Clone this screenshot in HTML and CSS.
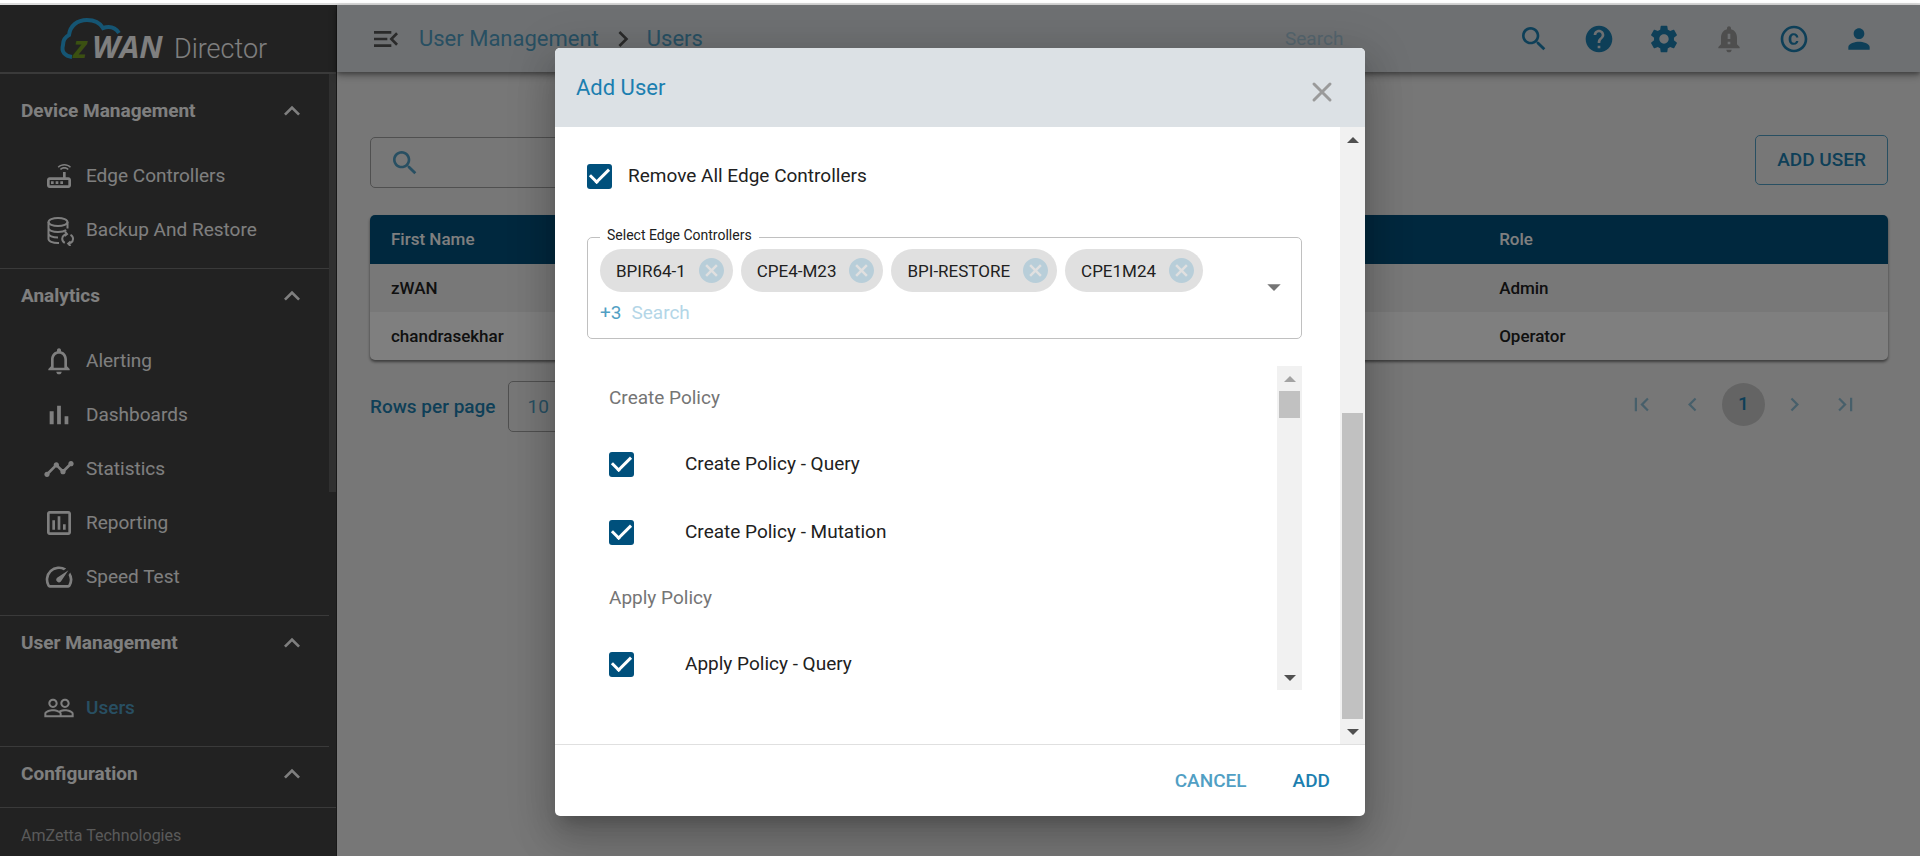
FILE: index.html
```html
<!DOCTYPE html>
<html lang="en">
<head>
<meta charset="utf-8">
<title>zWAN Director - Users</title>
<link rel="stylesheet" href="styles.css">
</head>
<body>
<div class="app">
  <aside class="sidebar">
    <div class="brand">
      <svg class="brand-logo" viewBox="0 0 220 56" role="img" aria-label="zWAN Director">
        <path d="M12 41C5 40 1 36 3 29C3 24 5 21 9 19C10 10 17 4 27 4C34 4 40 7 43 12C49 10 55 11 59 17" fill="none" stroke="#2aaae6" stroke-width="4"/>
        <text class="logo-z" x="13" y="42">z</text>
        <text class="logo-wan" x="32" y="42">WAN</text>
        <text class="logo-director" x="114" y="42">Director</text>
      </svg>
    </div>
    <div class="nav-wrap">
      <nav class="nav">
        <section class="group first">
          <button class="group-title">Device Management<svg class="icon" viewBox="0 0 24 24"><path d="M12 8l-6 6 1.41 1.41L12 10.83l4.59 4.58L18 14z"/></svg></button>
          <a class="nav-item" href="#"><svg class="icon" viewBox="0 0 24 24"><path d="M19 13h-2V9h-2v4H5c-1.1 0-2 .9-2 2v4c0 1.1.9 2 2 2h14c1.1 0 2-.9 2-2v-4c0-1.1-.9-2-2-2zm0 6H5v-4h14v4zM6 16h2v2H6zm3.500 0h2v2h-2zm3.500 0h2v2h-2zM20.200 5.900l.8-.8C19.600 3.700 17.800 3 16 3s-3.600.7-5 2.100l.8.8C13 4.800 14.500 4.200 16 4.200s3 .6 4.200 1.700zm-.9.8c-.9-.9-2.100-1.400-3.300-1.400s-2.400.5-3.300 1.400l.8.8c.7-.7 1.600-1 2.500-1 .9 0 1.800.3 2.500 1l.8-.8z"/></svg>Edge Controllers</a>
          <a class="nav-item" href="#"><svg class="icon line" viewBox="0 0 32 32"><ellipse cx="15" cy="8" rx="9.500" ry="4"/><path d="M5.500 8v17c0 2.200 4 4 9.500 4h1M24.500 8v6.500M5.500 14c0 2.200 4 4 9.500 4 3.500 0 6.500-.7 8.200-1.800M5.500 19.700c0 2 4 3.800 9.500 3.800"/><path d="M21.800 28.800a4.500 4.500 0 0 1-.3-8l2.200-.6M27.500 20.800a4.500 4.500 0 0 1 .2 8l-2.200.6M22 17.600l2 2.500-2.400 2M27.400 32l-2.200-2.500 2.400-2"/></svg>Backup And Restore</a>
        </section>
        <section class="group">
          <button class="group-title">Analytics<svg class="icon" viewBox="0 0 24 24"><path d="M12 8l-6 6 1.41 1.41L12 10.83l4.59 4.58L18 14z"/></svg></button>
          <a class="nav-item" href="#"><svg class="icon" viewBox="0 0 24 24"><path d="M12 22c1.100 0 2-.9 2-2h-4c0 1.100.9 2 2 2zm6-6v-5c0-3.070-1.630-5.640-4.500-6.320V4c0-.83-.67-1.500-1.500-1.500s-1.500.67-1.500 1.500v.68C7.640 5.360 6 7.920 6 11v5l-2 2v1h16v-1l-2-2zm-2 1H8v-6c0-2.480 1.510-4.500 4-4.500s4 2.020 4 4.500v6z"/></svg>Alerting</a>
          <a class="nav-item" href="#"><svg class="icon" viewBox="0 0 24 24"><path d="M5 9.200h3V19H5zM10.600 5h2.800v14h-2.800zm5.600 8H19v6h-2.800z"/></svg>Dashboards</a>
          <a class="nav-item" href="#"><svg class="icon" viewBox="0 0 24 24"><path d="M23 8c0 1.100-.9 2-2 2-.18 0-.35-.02-.51-.07l-3.560 3.550c.05.16.07.34.07.52 0 1.100-.9 2-2 2s-2-.9-2-2c0-.18.02-.36.07-.52l-2.550-2.550c-.16.05-.34.07-.52.07s-.36-.02-.52-.07l-4.550 4.560c.05.16.07.33.07.51 0 1.100-.9 2-2 2s-2-.9-2-2 .9-2 2-2c.18 0 .35.02.51.07l4.560-4.550C8.020 9.360 8 9.180 8 9c0-1.100.9-2 2-2s2 .9 2 2c0 .18-.02.36-.07.52l2.550 2.550c.16-.05.34-.07.52-.07s.36.02.52.07l3.550-3.560C19.020 8.350 19 8.180 19 8c0-1.100.9-2 2-2s2 .9 2 2z"/></svg>Statistics</a>
          <a class="nav-item" href="#"><svg class="icon" viewBox="0 0 24 24"><path d="M19 3H5c-1.100 0-2 .9-2 2v14c0 1.100.9 2 2 2h14c1.100 0 2-.9 2-2V5c0-1.100-.9-2-2-2zm0 16H5V5h14v14zM7 10h2v7H7zm4-3h2v10h-2zm4 6h2v4h-2z"/></svg>Reporting</a>
          <a class="nav-item" href="#"><svg class="icon" viewBox="0 0 24 24"><path d="M20.380 8.570l-1.230 1.850a8 8 0 0 1-.22 7.580H5.070A8 8 0 0 1 15.580 6.850l1.850-1.230A10 10 0 0 0 3.350 19a2 2 0 0 0 1.720 1h13.850a2 2 0 0 0 1.740-1 10 10 0 0 0-.27-10.440zM10.590 15.410a2 2 0 0 0 2.830 0l5.660-8.490-8.490 5.660a2 2 0 0 0 0 2.830z"/></svg>Speed Test</a>
        </section>
        <section class="group">
          <button class="group-title">User Management<svg class="icon" viewBox="0 0 24 24"><path d="M12 8l-6 6 1.41 1.41L12 10.83l4.59 4.58L18 14z"/></svg></button>
          <a class="nav-item active" href="#"><svg class="icon" viewBox="0 0 24 24"><path d="M16.500 13c-1.200 0-3.070.34-4.500 1-1.430-.67-3.300-1-4.500-1C5.330 13 1 14.080 1 16.250V19h22v-2.750c0-2.170-4.330-3.250-6.500-3.250zm-4 4.500h-10v-1.250c0-.54 2.560-1.750 5-1.750s5 1.210 5 1.750v1.250zm9 0H14v-1.250c0-.46-.2-.86-.52-1.220.88-.3 1.960-.53 3.020-.53 2.440 0 5 1.210 5 1.750v1.250zM7.500 12c1.930 0 3.500-1.570 3.500-3.500S9.430 5 7.500 5 4 6.570 4 8.500 5.570 12 7.500 12zm0-5.500c1.100 0 2 .9 2 2s-.9 2-2 2-2-.9-2-2 .9-2 2-2zm9 5.500c1.930 0 3.500-1.570 3.500-3.500S18.430 5 16.500 5 13 6.570 13 8.500s1.570 3.500 3.500 3.500zm0-5.500c1.100 0 2 .9 2 2s-.9 2-2 2-2-.9-2-2 .9-2 2-2z"/></svg>Users</a>
        </section>
        <section class="group">
          <button class="group-title">Configuration<svg class="icon" viewBox="0 0 24 24"><path d="M12 8l-6 6 1.41 1.41L12 10.83l4.59 4.58L18 14z"/></svg></button>
        </section>
      </nav>
      <div class="nav-scroll" aria-hidden="true"><div class="nav-thumb"></div></div>
    </div>
    <footer class="sidebar-footer">AmZetta Technologies</footer>
  </aside>

  <div class="page">
    <header class="topbar">
      <button class="icon-btn menu" aria-label="Collapse menu"><svg class="icon" viewBox="0 0 24 24"><path d="M3 18h13v-2H3v2zM3 13h10v-2H3v2zm0-7v2h13V6H3zm18 9.590L17.420 12 21 8.410 19.590 7l-5 5 5 5L21 15.590z"/></svg></button>
      <nav class="crumbs" aria-label="Breadcrumb">
        <a href="#">User Management</a>
        <svg class="icon" viewBox="0 0 24 24"><path d="M10 6L8.590 7.410 13.170 12l-4.580 4.590L10 18l6-6z"/></svg>
        <a href="#">Users</a>
      </nav>
      <input class="top-search" type="text" placeholder="Search" aria-label="Search">
      <div class="actions">
        <button class="icon-btn" aria-label="Search"><svg class="icon" viewBox="0 0 24 24"><path d="M15.500 14h-.79l-.28-.27C15.410 12.590 16 11.110 16 9.500 16 5.910 13.090 3 9.500 3S3 5.910 3 9.500 5.910 16 9.500 16c1.610 0 3.090-.59 4.230-1.570l.27.28v.79l5 4.990L20.490 19l-4.990-5zm-6 0C7.010 14 5 11.990 5 9.500S7.010 5 9.500 5 14 7.010 14 9.500 11.990 14 9.500 14z"/></svg></button>
        <button class="icon-btn" aria-label="Help"><svg class="icon" viewBox="0 0 24 24"><path d="M12 2C6.480 2 2 6.480 2 12s4.480 10 10 10 10-4.480 10-10S17.520 2 12 2zm1 17h-2v-2h2v2zm2.070-7.750l-.9.92C13.450 12.900 13 13.500 13 15h-2v-.5c0-1.100.45-2.100 1.170-2.830l1.240-1.260c.37-.36.59-.86.59-1.410 0-1.100-.9-2-2-2s-2 .9-2 2H8c0-2.210 1.790-4 4-4s4 1.790 4 4c0 .88-.36 1.680-.93 2.250z"/></svg></button>
        <button class="icon-btn" aria-label="Settings"><svg class="icon" viewBox="0 0 24 24"><path d="M19.430 12.980c.04-.32.07-.64.07-.98s-.03-.66-.07-.98l2.110-1.650c.19-.15.24-.42.12-.64l-2-3.460c-.12-.22-.39-.3-.61-.22l-2.490 1c-.52-.4-1.080-.73-1.690-.98l-.38-2.650C14.460 2.180 14.250 2 14 2h-4c-.25 0-.46.18-.49.42l-.38 2.650c-.61.25-1.170.59-1.690.98l-2.490-1c-.23-.09-.49 0-.61.22l-2 3.460c-.13.22-.07.49.12.64l2.110 1.650c-.04.32-.07.65-.07.98s.03.66.07.98l-2.110 1.650c-.19.15-.24.42-.12.64l2 3.460c.12.22.39.3.61.22l2.490-1c.52.4 1.080.73 1.690.98l.38 2.650c.03.24.24.42.49.42h4c.25 0 .46-.18.49-.42l.38-2.650c.61-.25 1.170-.59 1.690-.98l2.490 1c.23.09.49 0 .61-.22l2-3.460c.12-.22.07-.49-.12-.64l-2.110-1.650zM12 15.500c-1.930 0-3.500-1.570-3.500-3.500s1.570-3.500 3.500-3.500 3.500 1.570 3.500 3.500-1.570 3.500-3.500 3.500z"/></svg></button>
        <button class="icon-btn muted" aria-label="Notifications"><svg class="icon" viewBox="0 0 24 24"><path d="M18 16v-5c0-3.070-1.640-5.640-4.500-6.320V4c0-.83-.67-1.500-1.500-1.500s-1.500.67-1.500 1.500v.68C7.630 5.360 6 7.920 6 11v5l-2 2v1h16v-1l-2-2zm-5 0h-2v-2h2v2zm0-4h-2V8h2v4zm-1 10c1.100 0 2-.9 2-2h-4c0 1.100.89 2 2 2z"/></svg></button>
        <button class="icon-btn" aria-label="Copyright"><svg class="icon" viewBox="0 0 24 24"><path d="M11.880 9.140c1.280.06 1.610 1.150 1.630 1.660h1.790c-.08-1.980-1.490-3.190-3.450-3.190C9.640 7.610 8 9 8 12.140c0 1.940.93 4.240 3.840 4.240 2.220 0 3.410-1.650 3.440-2.950h-1.790c-.03.59-.45 1.380-1.630 1.440-1.310-.04-1.860-1.060-1.860-2.730 0-2.890 1.280-2.980 1.880-3zM12 2C6.480 2 2 6.480 2 12s4.480 10 10 10 10-4.480 10-10S17.520 2 12 2zm0 18c-4.410 0-8-3.590-8-8s3.590-8 8-8 8 3.590 8 8-3.590 8-8 8z"/></svg></button>
        <button class="icon-btn" aria-label="Account"><svg class="icon" viewBox="0 0 24 24"><path d="M12 12c2.210 0 4-1.790 4-4s-1.790-4-4-4-4 1.790-4 4 1.790 4 4 4zm0 2c-2.670 0-8 1.340-8 4v2h16v-2c0-2.660-5.330-4-8-4z"/></svg></button>
      </div>
    </header>
    <main class="content">
      <div class="toolbar">
        <label class="search-box">
          <svg class="icon" viewBox="0 0 24 24"><path d="M15.500 14h-.79l-.28-.27C15.410 12.590 16 11.110 16 9.500 16 5.910 13.090 3 9.500 3S3 5.910 3 9.500 5.910 16 9.500 16c1.610 0 3.090-.59 4.230-1.570l.27.28v.79l5 4.990L20.490 19l-4.990-5zm-6 0C7.010 14 5 11.990 5 9.500S7.010 5 9.500 5 14 7.010 14 9.500 11.990 14 9.500 14z"/></svg>
          <input type="text" aria-label="Search users">
        </label>
        <button class="add-user">ADD USER</button>
      </div>
      <table class="users">
        <thead><tr><th class="name">First Name</th><th>Role</th></tr></thead>
        <tbody>
          <tr><td>zWAN</td><td>Admin</td></tr>
          <tr><td>chandrasekhar</td><td>Operator</td></tr>
        </tbody>
      </table>
      <div class="table-footer">
        <label class="rows">Rows per page
          <select><option>10</option></select>
        </label>
        <div class="pager">
          <button aria-label="First page"><svg class="icon" viewBox="0 0 24 24"><path d="M18.410 16.590L13.820 12l4.590-4.590L17 6l-6 6 6 6zM6 6h2v12H6z"/></svg></button>
          <button aria-label="Previous page"><svg class="icon" viewBox="0 0 24 24"><path d="M15.410 7.410L14 6l-6 6 6 6 1.410-1.410L10.830 12z"/></svg></button>
          <button class="current">1</button>
          <button aria-label="Next page"><svg class="icon" viewBox="0 0 24 24"><path d="M10 6L8.590 7.410 13.170 12l-4.580 4.590L10 18l6-6z"/></svg></button>
          <button aria-label="Last page"><svg class="icon" viewBox="0 0 24 24"><path d="M5.590 7.410L10.180 12l-4.590 4.590L7 18l6-6-6-6zM16 6h2v12h-2z"/></svg></button>
        </div>
      </div>
    </main>
  </div>

  <div class="backdrop">
    <div class="dialog" role="dialog" aria-labelledby="dialog-title">
      <div class="dialog-head">
        <h2 id="dialog-title">Add User</h2>
        <button class="close" aria-label="Close"><svg viewBox="0 0 24 24"><path d="M4 4l16 16M20 4L4 20"/></svg></button>
      </div>
      <div class="dialog-main">
        <div class="dialog-body">
          <label class="check-row remove-all"><input class="check" type="checkbox" checked>Remove All Edge Controllers</label>
          <fieldset class="picker">
            <legend>Select Edge Controllers</legend>
            <div class="picker-values">
              <span class="chip">BPIR64-1<button aria-label="Remove BPIR64-1"><svg class="icon" viewBox="2 2 20 20"><path d="M12 2C6.470 2 2 6.470 2 12s4.470 10 10 10 10-4.470 10-10S17.530 2 12 2zm5 13.590L15.590 17 12 13.410 8.410 17 7 15.590 10.590 12 7 8.410 8.410 7 12 10.590 15.590 7 17 8.410 13.410 12 17 15.590z"/></svg></button></span>
              <span class="chip">CPE4-M23<button aria-label="Remove CPE4-M23"><svg class="icon" viewBox="2 2 20 20"><path d="M12 2C6.470 2 2 6.470 2 12s4.470 10 10 10 10-4.470 10-10S17.530 2 12 2zm5 13.590L15.590 17 12 13.410 8.410 17 7 15.590 10.590 12 7 8.410 8.410 7 12 10.590 15.590 7 17 8.410 13.410 12 17 15.590z"/></svg></button></span>
              <span class="chip">BPI-RESTORE<button aria-label="Remove BPI-RESTORE"><svg class="icon" viewBox="2 2 20 20"><path d="M12 2C6.470 2 2 6.470 2 12s4.470 10 10 10 10-4.470 10-10S17.530 2 12 2zm5 13.590L15.590 17 12 13.410 8.410 17 7 15.590 10.590 12 7 8.410 8.410 7 12 10.590 15.590 7 17 8.410 13.410 12 17 15.590z"/></svg></button></span>
              <span class="chip">CPE1M24<button aria-label="Remove CPE1M24"><svg class="icon" viewBox="2 2 20 20"><path d="M12 2C6.470 2 2 6.470 2 12s4.470 10 10 10 10-4.470 10-10S17.530 2 12 2zm5 13.590L15.590 17 12 13.410 8.410 17 7 15.590 10.590 12 7 8.410 8.410 7 12 10.590 15.590 7 17 8.410 13.410 12 17 15.590z"/></svg></button></span>
              <div class="picker-line"><span class="more">+3</span><input type="text" placeholder="Search" aria-label="Search edge controllers"></div>
            </div>
            <button class="open" aria-label="Open"><svg class="icon" viewBox="0 0 24 24"><path d="M7 10l5 5 5-5z"/></svg></button>
          </fieldset>
          <div class="policies">
            <div class="policy-list">
              <h3>Create Policy</h3>
              <label class="check-row"><input class="check" type="checkbox" checked>Create Policy - Query</label>
              <label class="check-row"><input class="check" type="checkbox" checked>Create Policy - Mutation</label>
              <h3>Apply Policy</h3>
              <label class="check-row"><input class="check" type="checkbox" checked>Apply Policy - Query</label>
            </div>
            <div class="scrollbar" aria-hidden="true">
              <i class="arrow up off"></i><div class="track"><div class="thumb top"></div></div><i class="arrow down"></i>
            </div>
          </div>
        </div>
        <div class="scrollbar" aria-hidden="true">
          <i class="arrow up"></i><div class="track end"><div class="thumb half"></div></div><i class="arrow down"></i>
        </div>
      </div>
      <div class="dialog-foot">
        <button class="cancel">CANCEL</button>
        <button>ADD</button>
      </div>
    </div>
  </div>
</div>
</body>
</html>
```
FILE: styles.css
```css
:root {
  --blue: #1c7fb0;
  --blue-soft: #519fc4;
  --navy: #00507c;
  --bar: #dce1e5;
  --line: #c0c0c0;
}

* { box-sizing: border-box; }

body {
  margin: 0;
  height: 100vh;
  padding-top: 3px;
  background: #fff;
  font: 400 19px/24px Roboto, "Liberation Sans", sans-serif;
  color: #212121;
  overflow: hidden;
}

button, input, select { font: inherit; color: inherit; }
button { background: none; border: 0; padding: 0; }
a { color: inherit; text-decoration: none; }
h2, h3 { margin: 0; font-weight: 400; }

.icon { width: 32px; height: 32px; fill: currentColor; flex: none; display: block; }
.icon.line { fill: none; stroke: currentColor; stroke-width: 2; }

.app { position: relative; display: flex; height: 100%; border-top: 2px solid #dcdcdc; }

/* Sidebar */
.sidebar {
  width: 337px;
  flex: none;
  display: flex;
  flex-direction: column;
  background: #444;
  border-right: 1px solid #333;
  color: #fff;
}
.brand { flex: none; height: 69px; padding: 11px 0 0 60px; border-bottom: 2px solid #757575; }
.brand-logo { display: block; width: 220px; height: 56px; overflow: visible; }
.logo-z, .logo-wan { font: italic 700 31px "Open Sans", sans-serif; fill: #fff; }
.logo-z { fill: #76a023; }
.logo-director { font: 300 27px Roboto, sans-serif; fill: #fff; }
.nav-wrap { flex: 1; min-height: 0; display: flex; }
.nav { flex: 1; overflow: hidden; }
.nav-scroll { width: 7px; flex: none; }
.nav-thumb { height: 57%; background: #606060; }
.group { padding-bottom: 11px; border-top: 1px solid #757575; }
.group.first { padding-top: 10px; border-top: 0; }
.group-title {
  display: flex;
  align-items: center;
  justify-content: space-between;
  width: 100%;
  height: 54px;
  margin-bottom: 11px;
  padding: 0 21px;
  font-weight: 700;
}
.nav-item { display: flex; align-items: center; gap: 11px; height: 54px; padding-left: 43px; }
.nav-item.active { font-weight: 500; color: var(--blue-soft); }
.nav-item.active .icon { color: #fff; }
.sidebar-footer { flex: none; height: 49px; padding: 16px 21px 0; border-top: 1px solid #757575; font-size: 16px; color: #b4b4b4; }

/* Page */
.page { flex: 1; min-width: 0; display: flex; flex-direction: column; background: #efefef; }
.topbar {
  display: flex;
  align-items: center;
  height: 67px;
  padding: 0 45px 0 33px;
  background: var(--bar);
  box-shadow: 0 2px 4px rgba(0, 0, 0, .3), 0 4px 8px rgba(0, 0, 0, .25);
}
.icon-btn { color: var(--blue); }
.icon-btn.menu { color: #555; }
.icon-btn.muted { color: #9c9c9c; }
.crumbs { flex: 1; display: flex; align-items: center; gap: 8px; padding-left: 17px; font-size: 22px; color: var(--blue-soft); }
.crumbs .icon { color: #555; }
.top-search { width: 216px; margin-right: 17px; padding: 0; border: 0; background: none; }
.top-search::placeholder { color: #a9c9da; opacity: 1; }
.actions { display: flex; gap: 33px; }
.content { padding: 63px 32px 0 33px; }
.toolbar { display: flex; justify-content: space-between; align-items: flex-start; height: 53px; }
.search-box { display: flex; align-self: flex-end; align-items: center; width: 360px; height: 51px; padding-left: 18px; border: 1px solid #a0a0a0; border-radius: 5px; color: var(--blue-soft); }
.search-box input { flex: 1; min-width: 0; border: 0; background: none; }
.add-user { height: 50px; padding: 0 21px; border: 1px solid var(--blue-soft); border-radius: 5px; font-weight: 500; color: var(--blue); }

.users {
  width: 100%;
  margin-top: 27px;
  border-spacing: 0;
  border-radius: 5px;
  overflow: hidden;
  background: #fff;
  box-shadow: 0 2px 3px rgba(0, 0, 0, .5);
  font-size: 17px;
  text-align: left;
}
.users th, .users td { height: 48px; padding: 0 21px; font-weight: 500; }
.users th { height: 49px; padding-bottom: 2px; background: var(--navy); color: #fff; }
.users .name { width: 73%; }
.users tbody tr:nth-child(odd) { background: #f0f0f0; }

.table-footer { display: flex; justify-content: space-between; align-items: center; margin-top: 21px; height: 51px; color: var(--blue); }
.rows { display: flex; align-items: center; gap: 12px; font-weight: 500; }
.rows select { width: 100px; height: 51px; padding-left: 19px; appearance: none; background: none; border: 1px solid #a0a0a0; border-radius: 5px; font-weight: 400; color: var(--blue-soft); }
.pager { display: flex; gap: 8px; padding: 0 21px 5px 0; color: var(--blue-soft); }
.pager button { display: grid; place-items: center; width: 43px; height: 43px; border-radius: 50%; }
.pager button:not(.current) { opacity: .6; }
.pager .current { background: #c8c8c8; color: var(--blue); font-weight: 500; }
.pager .icon { width: 27px; height: 27px; }

/* Dialog */
.backdrop { position: absolute; inset: 0; display: flex; justify-content: center; padding: 43px 32px 40px; background: rgba(0, 0, 0, .5); }
.dialog {
  display: flex;
  flex-direction: column;
  width: 100%;
  max-width: 810px;
  border-radius: 5px;
  overflow: hidden;
  background: #fff;
  box-shadow: 0 11px 15px -7px rgba(0, 0, 0, .2), 0 24px 38px 3px rgba(0, 0, 0, .14), 0 9px 46px 8px rgba(0, 0, 0, .12);
}
.dialog-head { flex: none; display: flex; justify-content: space-between; align-items: center; height: 79px; padding: 0 31px 0 21px; background: var(--bar); }
.dialog-head h2 { font-size: 22px; color: var(--blue); }
.close { color: #9a9a9a; }
.close svg { display: block; width: 24px; height: 24px; margin-top: 8px; fill: none; stroke: currentColor; stroke-width: 3; stroke-linecap: round; }
.dialog-main { flex: 1; min-height: 0; display: flex; }
.dialog-body { flex: 1; min-width: 0; padding: 31px 38px 0 32px; }

.check-row { display: flex; align-items: center; }
.check { appearance: none; flex: none; display: grid; place-items: center; width: 25px; height: 25px; margin: 0; border-radius: 3px; background: var(--navy); }
.check::before { content: ""; width: 16px; height: 8px; margin-top: -5px; border-left: 3px solid #fff; border-bottom: 3px solid #fff; transform: rotate(-45deg); }
.remove-all { gap: 16px; height: 36px; }

.picker {
  display: flex;
  align-items: center;
  min-width: 0;
  height: 112px;
  margin: 33px 0 0;
  padding: 0 11px 11px 12px;
  border: 1px solid var(--line);
  border-radius: 5px;
}
.picker legend { padding: 0 7px 3px; font-size: 14px; line-height: 17px; }
.picker-values { flex: 1; display: flex; flex-wrap: wrap; gap: 9px 8px; }
.chip { display: flex; align-items: center; gap: 13px; height: 43px; padding: 0 9px 0 16px; border-radius: 22px; background: #e0e0e0; font-size: 17px; }
.chip .icon { width: 25px; height: 25px; color: #b8ced9; }
.picker-line { display: flex; gap: 10px; width: 100%; }
.more { color: var(--blue-soft); }
.picker-line input { flex: 1; padding: 0; border: 0; }
.picker-line input::placeholder { color: #b4d6e7; opacity: 1; }
.open { color: #757575; }

.policies { display: flex; height: 324px; margin-top: 27px; }
.policy-list { flex: 1; padding-left: 22px; overflow: hidden; }
.policy-list h3 { height: 64px; font-size: 19px; line-height: 64px; color: #757575; }
.policy-list .check-row { gap: 51px; height: 68px; }

.scrollbar { flex: none; display: flex; flex-direction: column; width: 25px; background: #f1f1f1; }
.arrow { flex: none; display: grid; place-items: center; height: 25px; color: #505050; }
.arrow.off { color: #a3a3a3; }
.arrow::before { content: ""; border: 6px solid transparent; }
.arrow.up::before { border-top: 0; border-bottom-color: currentColor; }
.arrow.down::before { border-bottom: 0; border-top-color: currentColor; }
.track { flex: 1; display: flex; flex-direction: column; padding: 0 2px; }
.track.end { justify-content: flex-end; }
.thumb { background: #c1c1c1; }
.thumb.top { height: 10%; }
.thumb.half { height: 54%; }

.dialog-foot { flex: none; display: flex; justify-content: flex-end; align-items: center; gap: 46px; height: 72px; padding-right: 35px; border-top: 1px solid #e0e0e0; font-weight: 500; color: var(--blue); }
.cancel { color: var(--blue-soft); }
```
